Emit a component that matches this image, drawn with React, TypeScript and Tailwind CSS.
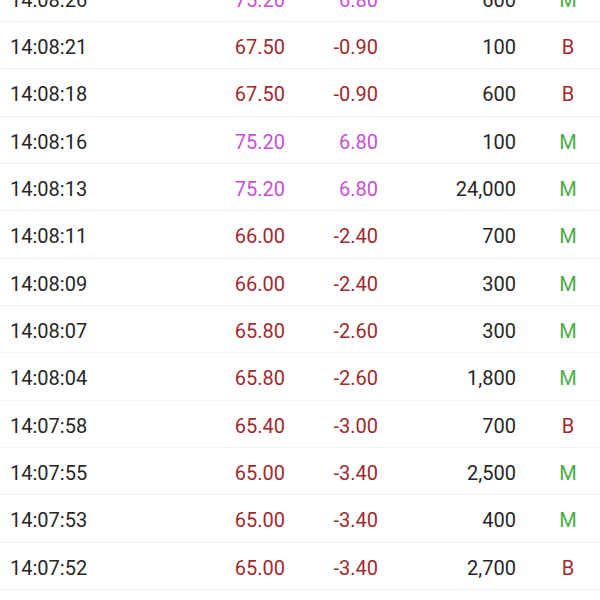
import React from "react";

type Row = { t: string; p: string; c: string; v: string; k: "M" | "B"; up?: boolean };

const rows: Row[] = [
  { t: "14:08:26", p: "75.20", c: "6.80", v: "600", k: "M", up: true },
  { t: "14:08:21", p: "67.50", c: "-0.90", v: "100", k: "B" },
  { t: "14:08:18", p: "67.50", c: "-0.90", v: "600", k: "B" },
  { t: "14:08:16", p: "75.20", c: "6.80", v: "100", k: "M", up: true },
  { t: "14:08:13", p: "75.20", c: "6.80", v: "24,000", k: "M", up: true },
  { t: "14:08:11", p: "66.00", c: "-2.40", v: "700", k: "M" },
  { t: "14:08:09", p: "66.00", c: "-2.40", v: "300", k: "M" },
  { t: "14:08:07", p: "65.80", c: "-2.60", v: "300", k: "M" },
  { t: "14:08:04", p: "65.80", c: "-2.60", v: "1,800", k: "M" },
  { t: "14:07:58", p: "65.40", c: "-3.00", v: "700", k: "B" },
  { t: "14:07:55", p: "65.00", c: "-3.40", v: "2,500", k: "M" },
  { t: "14:07:53", p: "65.00", c: "-3.40", v: "400", k: "M" },
  { t: "14:07:52", p: "65.00", c: "-3.40", v: "2,700", k: "B" },
];

export default function App() {
  return (
    <div
      className="w-[600px] h-[600px] overflow-hidden bg-white text-[20px] text-[#262626]"
      style={{ fontFamily: "Roboto, 'Noto Sans', sans-serif" }}
    >
      <div className="-mt-[25.33px]">
        {rows.map((r, i) => (
          <div
            key={i}
            className="flex items-center h-[47.33px] border-b border-[#efefef] pl-[10px] pt-[4px] leading-none"
          >
            <div className="w-[175px]">{r.t}</div>
            <div className={`w-[100px] text-right ${r.up ? "text-[#c74fd6]" : "text-[#9e2a2e]"}`}>{r.p}</div>
            <div className={`w-[93px] text-right ${r.up ? "text-[#c74fd6]" : "text-[#9e2a2e]"}`}>{r.c}</div>
            <div className="w-[138px] text-right">{r.v}</div>
            <div className="w-[20px]" />
            <div className={`w-[64px] text-center ${r.k === "M" ? "text-[#4aac45]" : "text-[#a3282e]"}`}>{r.k}</div>
          </div>
        ))}
      </div>
    </div>
  );
}
